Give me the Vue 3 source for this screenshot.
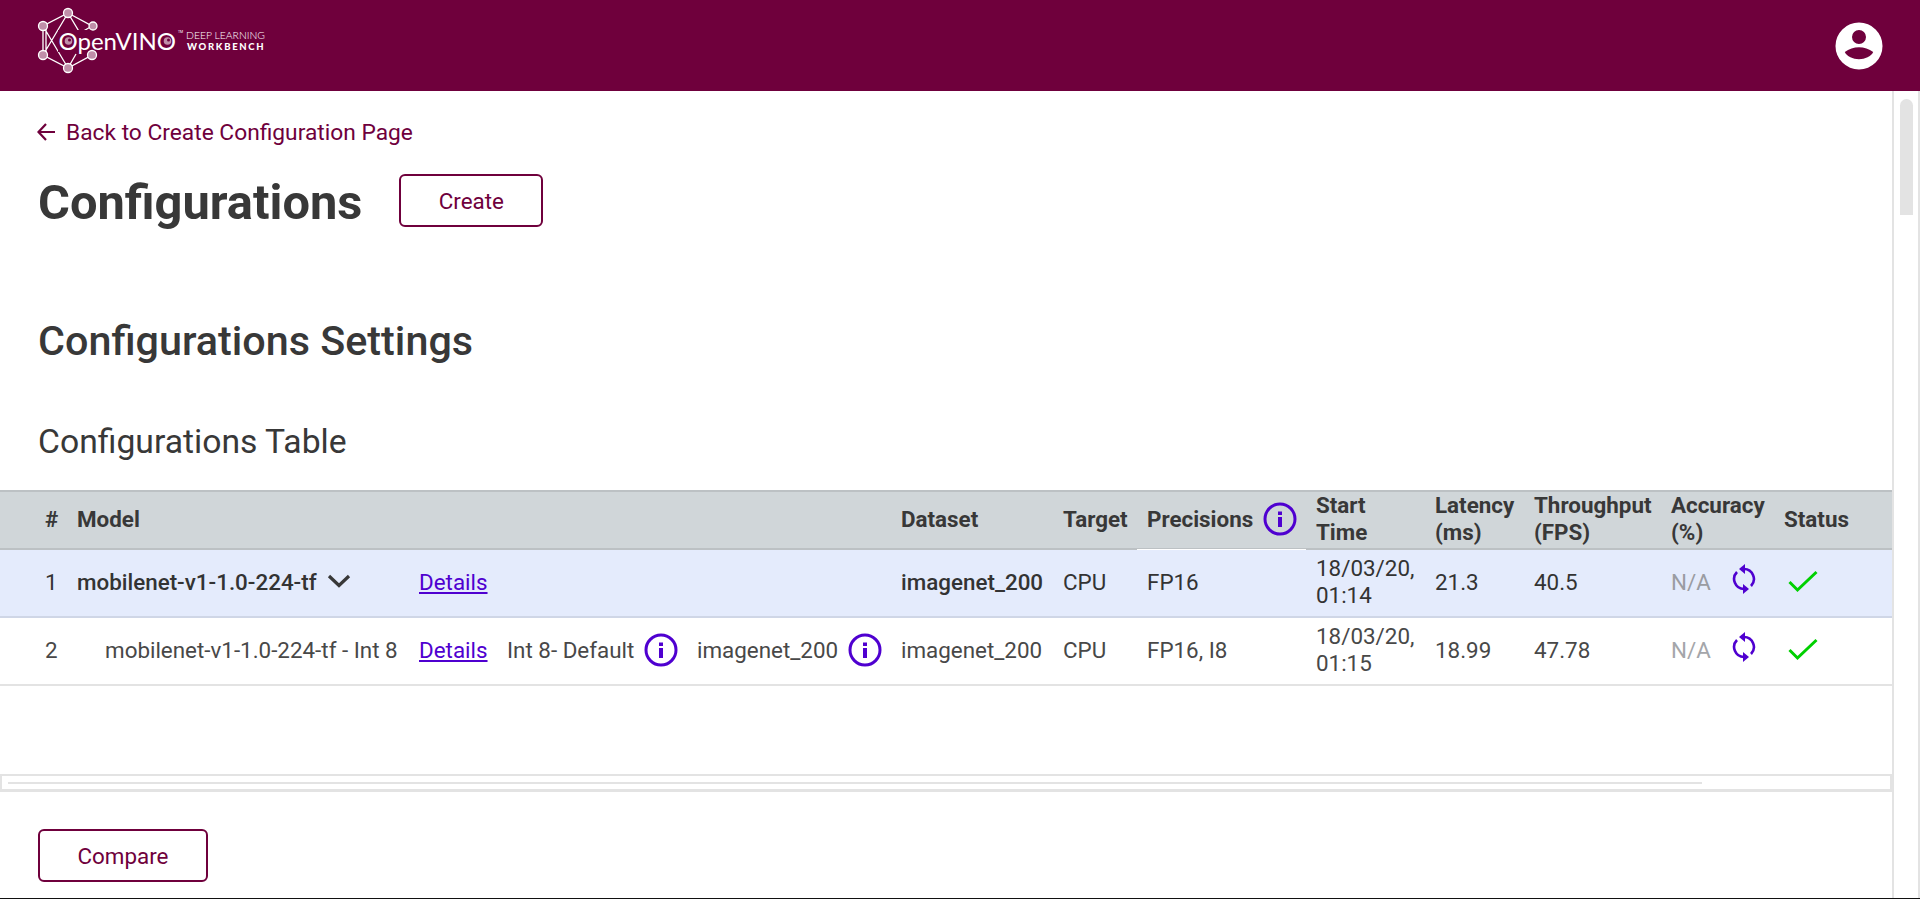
<template>
  <div class="page">
    <header class="topbar">
      <svg class="logo" width="290" height="91" viewBox="0 0 290 91">
        <g fill="none" stroke="#fff" stroke-width="1.3">
          <path d="M68 13 L92 26 L92 55 L68 68 L43 55 L43 26 Z" />
          <path d="M46 26 L46 55 M43 26 L68 68 M43 55 L68 13 M68 13 L80 33 L92 26 M68 68 L76 54" />
        </g>
        <rect x="58" y="30" width="42" height="22" fill="#6f003c" />
        <g fill="#c08fa9" stroke="#fff" stroke-width="1.3">
          <circle cx="68" cy="13" r="4.5" />
          <circle cx="93" cy="26" r="4" />
          <circle cx="43" cy="26" r="4.5" />
          <circle cx="43" cy="55" r="4.5" />
          <circle cx="92" cy="55" r="4.5" />
          <circle cx="68" cy="68" r="4.5" />
        </g>
        <text x="58.500" y="49.500" class="logo-name">OpenVINO</text>
        <circle cx="68.500" cy="41" r="3.800" fill="#c08fa9" />
        <circle cx="69.500" cy="40" r="1.500" fill="#6f003c" />
        <circle cx="167.500" cy="41" r="3.800" fill="#c08fa9" />
        <circle cx="168.500" cy="40" r="1.500" fill="#6f003c" />
        <text x="178" y="33" class="logo-tm">TM</text>
        <text x="186" y="39" class="logo-sub">DEEP LEARNING</text>
        <text x="187" y="50" class="logo-sub2">WORKBENCH</text>
      </svg>
      <svg class="user" width="48" height="48" viewBox="0 0 48 48">
        <path fill="#fff" fill-rule="evenodd" d="M24 .5a23.5 23.5 0 1 0 0 47a23.5 23.5 0 1 0 0-47ZM24 8a7 7 0 1 1 0 14a7 7 0 1 1 0-14ZM9.800 30C18 23.600 30 23.600 38.200 30C34 39.500 14 39.500 9.800 30Z" />
      </svg>
    </header>

    <div class="body">
      <main class="content">
        <div class="intro">
          <a class="back">
            <svg width="18" height="20" viewBox="0 0 18 20" fill="none" stroke="#6f003c" stroke-width="2.200">
              <path d="M18 10H1.500M9 2L1.500 10L9 18" />
            </svg>
            Back to Create Configuration Page
          </a>
          <div class="title-row">
            <h1>Configurations</h1>
            <button class="outline create">Create</button>
          </div>
          <h2>Configurations Settings</h2>
          <h3>Configurations Table</h3>
        </div>

        <div class="table">
          <div class="row head">
            <div class="num">#</div>
            <div class="span4">Model</div>
            <div>Dataset</div>
            <div>Target</div>
            <div class="prec">
              Precisions
              <svg class="info" viewBox="0 0 34 34"><circle cx="17" cy="17" r="15" /><path class="info-i" d="M17 9.500v3.500M17 15v10" /></svg>
            </div>
            <div>Start Time</div>
            <div>Latency (ms)</div>
            <div>Throughput (FPS)</div>
            <div>Accuracy (%)</div>
            <div>Status</div>
          </div>

          <div v-for="r in rows" :key="r.num" class="row" :class="{ parent: r.parent }">
            <div class="num">{{ r.num }}</div>
            <div :class="r.parent ? 'model-name' : 'model-child'">
              {{ r.model }}
              <svg v-if="r.parent" class="chev" width="24" height="14" viewBox="0 0 24 14" fill="none" stroke="#383838" stroke-width="3.200">
                <path d="M2 2L12 11.500L22 2" />
              </svg>
            </div>
            <div><a class="link">Details</a></div>
            <div class="with-info">
              <template v-if="r.optimization">
                {{ r.optimization }}
                <svg class="info" viewBox="0 0 34 34"><circle cx="17" cy="17" r="15" /><path class="info-i" d="M17 9.500v3.500M17 15v10" /></svg>
              </template>
            </div>
            <div class="with-info">
              <template v-if="r.calibration">
                {{ r.calibration }}
                <svg class="info" viewBox="0 0 34 34"><circle cx="17" cy="17" r="15" /><path class="info-i" d="M17 9.500v3.500M17 15v10" /></svg>
              </template>
            </div>
            <div class="strong">imagenet_200</div>
            <div>CPU</div>
            <div>{{ r.precisions }}</div>
            <div>{{ r.start }}</div>
            <div>{{ r.latency }}</div>
            <div>{{ r.fps }}</div>
            <div class="acc">
              <span class="na">N/A</span>
              <svg class="sync" width="26" height="32" viewBox="0 0 26 32" fill="none" stroke="#4f00d0" stroke-width="2.600">
                <path d="M13 6A10 10 0 0 1 20 23" />
                <path d="M13 26A10 10 0 0 1 6 9" />
                <path d="M8 6L14 1V11Z" fill="#4f00d0" stroke="none" />
                <path d="M18 26L12 21V31Z" fill="#4f00d0" stroke="none" />
              </svg>
            </div>
            <div>
              <svg class="check" width="30" height="24" viewBox="0 0 30 24" fill="none" stroke="#00d000" stroke-width="3">
                <path d="M1.500 12L9.500 20L28.500 2" />
              </svg>
            </div>
          </div>
        </div>

        <div class="hscroll"><div class="hthumb"></div></div>

        <button class="outline compare">Compare</button>
      </main>

      <div class="vscroll"><div class="vthumb"></div></div>
    </div>
  </div>
</template>

<script setup>
const rows = [
  {
    num: 1,
    parent: true,
    model: 'mobilenet-v1-1.0-224-tf',
    precisions: 'FP16',
    start: '18/03/20, 01:14',
    latency: '21.3',
    fps: '40.5'
  },
  {
    num: 2,
    parent: false,
    model: 'mobilenet-v1-1.0-224-tf - Int 8',
    optimization: 'Int 8- Default',
    calibration: 'imagenet_200',
    precisions: 'FP16, I8',
    start: '18/03/20, 01:15',
    latency: '18.99',
    fps: '47.78'
  }
];
</script>

<style>
html, body {
  margin: 0;
  overflow: hidden;
}
</style>

<style scoped>
.page {
  height: 899px;
  box-sizing: border-box;
  border-bottom: 1px solid #111;
  display: flex;
  flex-direction: column;
  overflow: hidden;
  font-family: Roboto, sans-serif;
  font-size: 22.400px;
  color: #383838;
  background: #fff;
}

.topbar {
  height: 91px;
  flex: none;
  background: #6f003c;
  display: flex;
  align-items: center;
  justify-content: space-between;
  padding-right: 37px;
}

.logo {
  display: block;
}

.logo-name {
  font-family: Lato, sans-serif;
  font-size: 24px;
  font-weight: 400;
  fill: #fff;
}

.logo-tm {
  font-family: Roboto, sans-serif;
  font-size: 3.500px;
  fill: #fff;
}

.logo-sub {
  font-family: Lato, sans-serif;
  font-size: 10.400px;
  font-weight: 300;
  fill: #fff;
}

.logo-sub2 {
  font-family: Lato, sans-serif;
  font-size: 9.500px;
  font-weight: 900;
  letter-spacing: 1.700px;
  fill: #fff;
}

.user {
  display: block;
}

.body {
  flex: 1;
  display: flex;
  min-height: 0;
}

.content {
  flex: 1;
  min-width: 0;
}

.intro {
  padding: 28px 0 0 38px;
}

.back {
  display: flex;
  align-items: center;
  gap: 11px;
  height: 26px;
  margin-left: -1px;
  font-size: 22.750px;
  color: #6f003c;
}

.title-row {
  display: flex;
  align-items: flex-start;
  gap: 37px;
  margin-top: 29px;
}

h1 {
  margin: 0;
  font-size: 48.800px;
  font-weight: 700;
  line-height: 58px;
}

.outline {
  box-sizing: border-box;
  background: #fff;
  border: 2px solid #6f003c;
  border-radius: 6px;
  color: #6f003c;
  font-family: Roboto, sans-serif;
  font-size: 22.400px;
  height: 53px;
  padding: 0;
}

.create {
  width: 144px;
}

h2 {
  margin: 84px 0 0;
  font-size: 41.300px;
  font-weight: 500;
  line-height: 50px;
}

h3 {
  margin: 56px 0 0;
  font-size: 33.700px;
  font-weight: 400;
  line-height: 40px;
}

.table {
  margin-top: 28px;
}

.row {
  display: grid;
  grid-template-columns: 77px 342px 88px 190px 204px 162px 84px 169px 119px 99px 137px 113px 1fr;
  align-items: center;
  box-sizing: border-box;
  height: 68px;
  border-bottom: 2px solid #e3e3e3;
  line-height: 27px;
  color: #484848;
}

.row > div {
  padding: 0 14px 2px 0;
}

.row > .num {
  padding-left: 45px;
  padding-right: 0;
}

.head {
  height: 60px;
  background: #d0d6d9;
  border-top: 2px solid #bcc1c4;
  border-bottom: 2px solid #bcc1c4;
  font-weight: 700;
  color: #383838;
}

.span4 {
  grid-column: span 4;
}

.prec {
  display: flex;
  align-items: center;
  gap: 10px;
  align-self: stretch;
  position: relative;
}

/* thin white mark under the sorted column */
.prec::after {
  content: "";
  position: absolute;
  left: -10px;
  width: 169px;
  bottom: -2px;
  height: 1px;
  background: #fff;
}

.parent {
  background: #e4ebfc;
  border-bottom-color: #cfd6e6;
  color: #333;
}

.model-name {
  display: flex;
  align-items: center;
  gap: 10px;
  font-weight: 500;
}

.chev {
  margin-bottom: 2px;
}

.row > .model-child {
  padding-left: 28px;
}

.parent .strong {
  font-weight: 500;
}

.link {
  color: #4f00d0;
  text-decoration: underline;
}

.with-info {
  display: flex;
  align-items: center;
  gap: 10px;
}

.info {
  width: 34px;
  height: 34px;
  flex: none;
  fill: none;
  stroke: #4f00d0;
  stroke-width: 3;
}

.info-i {
  stroke-width: 4;
}

.acc {
  display: flex;
  align-items: center;
  gap: 20px;
}

.na {
  color: #a4a6aa;
}

.parent .na {
  color: #9a9ca2;
}

.sync {
  display: block;
  margin-bottom: 6px;
}

.check {
  display: block;
  margin: 0 0 0 3.500px;
}

.hscroll {
  box-sizing: border-box;
  height: 18px;
  margin-top: 88px;
  border: 2px solid #e3e3e3;
  border-bottom-width: 3px;
  padding: 6px 6px 0;
}

.hthumb {
  width: 1694px;
  height: 2px;
  background: #e3e3e3;
}

.compare {
  display: block;
  width: 170px;
  margin: 37px 0 0 38px;
}

.vscroll {
  box-sizing: border-box;
  width: 28px;
  flex: none;
  border-left: 2px solid #e3e3e3;
  border-right: 2px solid #e3e3e3;
  padding: 8px 5px 0 6px;
}

.vthumb {
  width: 13px;
  height: 116px;
  border-radius: 7px 7px 0 0;
  background: #e3e3e3;
}
</style>
